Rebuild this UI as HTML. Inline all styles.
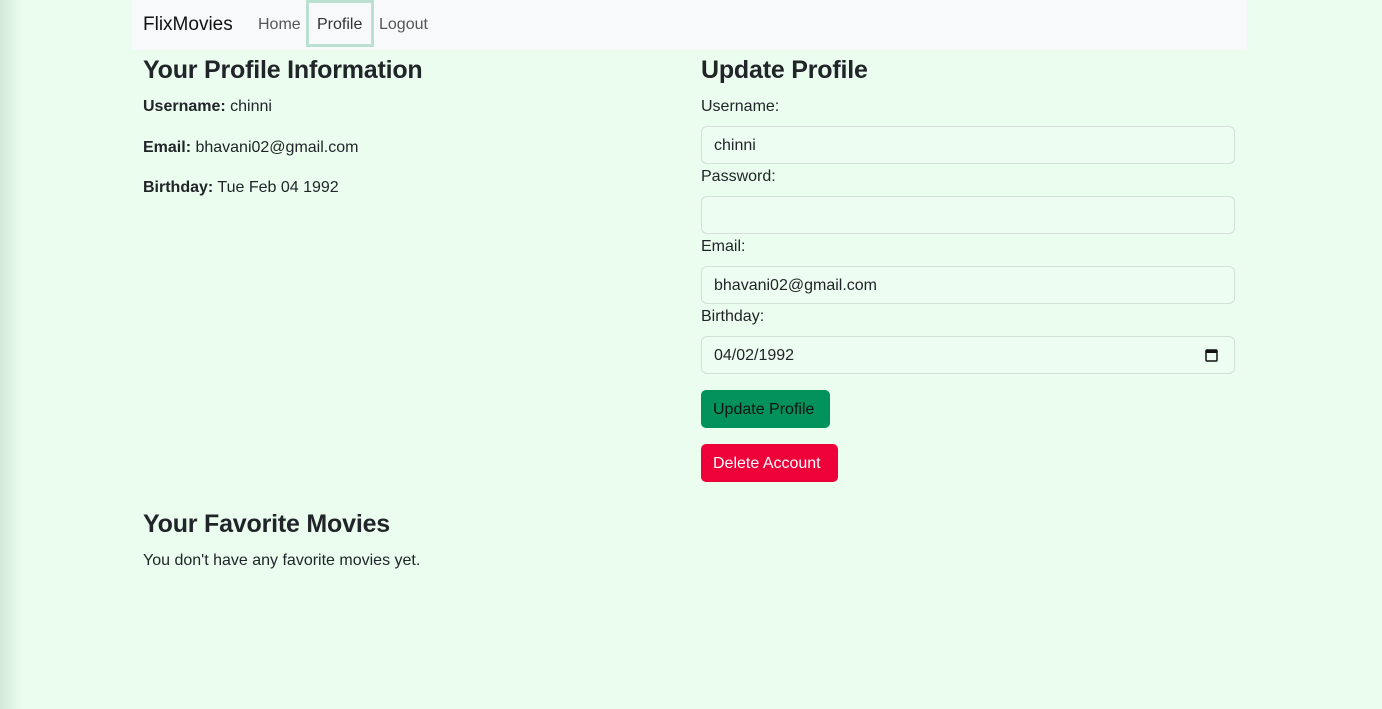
<!DOCTYPE html>
<html><head><meta charset="utf-8"><style>
*{box-sizing:border-box;margin:0;padding:0}
body{width:1382px;height:709px;overflow:hidden;background:#ebfdef;font-family:"Liberation Sans",Arial,sans-serif;color:#212529;font-size:16px;position:relative}
.shade{position:absolute;left:0;top:0;width:22px;height:709px;background:linear-gradient(to right,#d3e8da,#ebfdef)}
.nav{position:absolute;left:132px;top:0;width:1115px;height:50px;background:#f8f9fa}
.brand{position:absolute;left:11px;top:14px;font-size:19px;color:#111}
.nl{position:absolute;top:16px;font-size:16px;color:#555}
.act{position:absolute;left:174px;top:0;width:68px;height:47px;border:3px solid #b9e0d1}
h2{position:absolute;font-size:25px;font-weight:bold;color:#212529;letter-spacing:-0.2px}
.t{position:absolute;font-size:16px}
.lbl{position:absolute;left:701px;font-size:16px}
.inp{position:absolute;left:701px;width:534px;height:38px;border:1px solid #d3dfd8;border-radius:6px;background:#eefdf2;padding:10px 12px;font-size:16px}
.btn{position:absolute;left:701px;height:38px;border-radius:5px;padding:11px 12px;font-size:16px}
</style></head><body>
<div class="shade"></div>
<div class="nav">
<div class="brand">FlixMovies</div>
<div class="nl" style="left:126px">Home</div>
<div class="act"></div>
<div class="nl" style="left:185px;color:#333">Profile</div>
<div class="nl" style="left:247px">Logout</div>
</div>
<h2 style="left:143px;top:56px">Your Profile Information</h2>
<div class="t" style="left:143px;top:98px"><b>Username:</b> chinni</div>
<div class="t" style="left:143px;top:139px"><b>Email:</b> bhavani02@gmail.com</div>
<div class="t" style="left:143px;top:179px"><b>Birthday:</b> Tue Feb 04 1992</div>
<h2 style="left:701px;top:56px">Update Profile</h2>
<div class="lbl" style="top:98px">Username:</div>
<div class="inp" style="top:126px">chinni</div>
<div class="lbl" style="top:168px">Password:</div>
<div class="inp" style="top:196px"></div>
<div class="lbl" style="top:238px">Email:</div>
<div class="inp" style="top:266px">bhavani02@gmail.com</div>
<div class="lbl" style="top:308px">Birthday:</div>
<div class="inp" style="top:336px">04/02/1992
<svg style="position:absolute;right:16px;top:11px" width="13" height="14" viewBox="0 0 13 14"><rect x="1" y="2" width="11" height="11" rx="1" fill="none" stroke="#111" stroke-width="1.5"/><rect x="1" y="2" width="11" height="3" fill="#111"/></svg></div>
<div class="btn" style="top:390px;width:129px;background:#00925a;color:#111">Update Profile</div>
<div class="btn" style="top:444px;width:137px;background:#ee0038;color:#fff">Delete Account</div>
<h2 style="left:143px;top:510px">Your Favorite Movies</h2>
<div class="t" style="left:143px;top:552px">You don't have any favorite movies yet.</div>
</body></html>
